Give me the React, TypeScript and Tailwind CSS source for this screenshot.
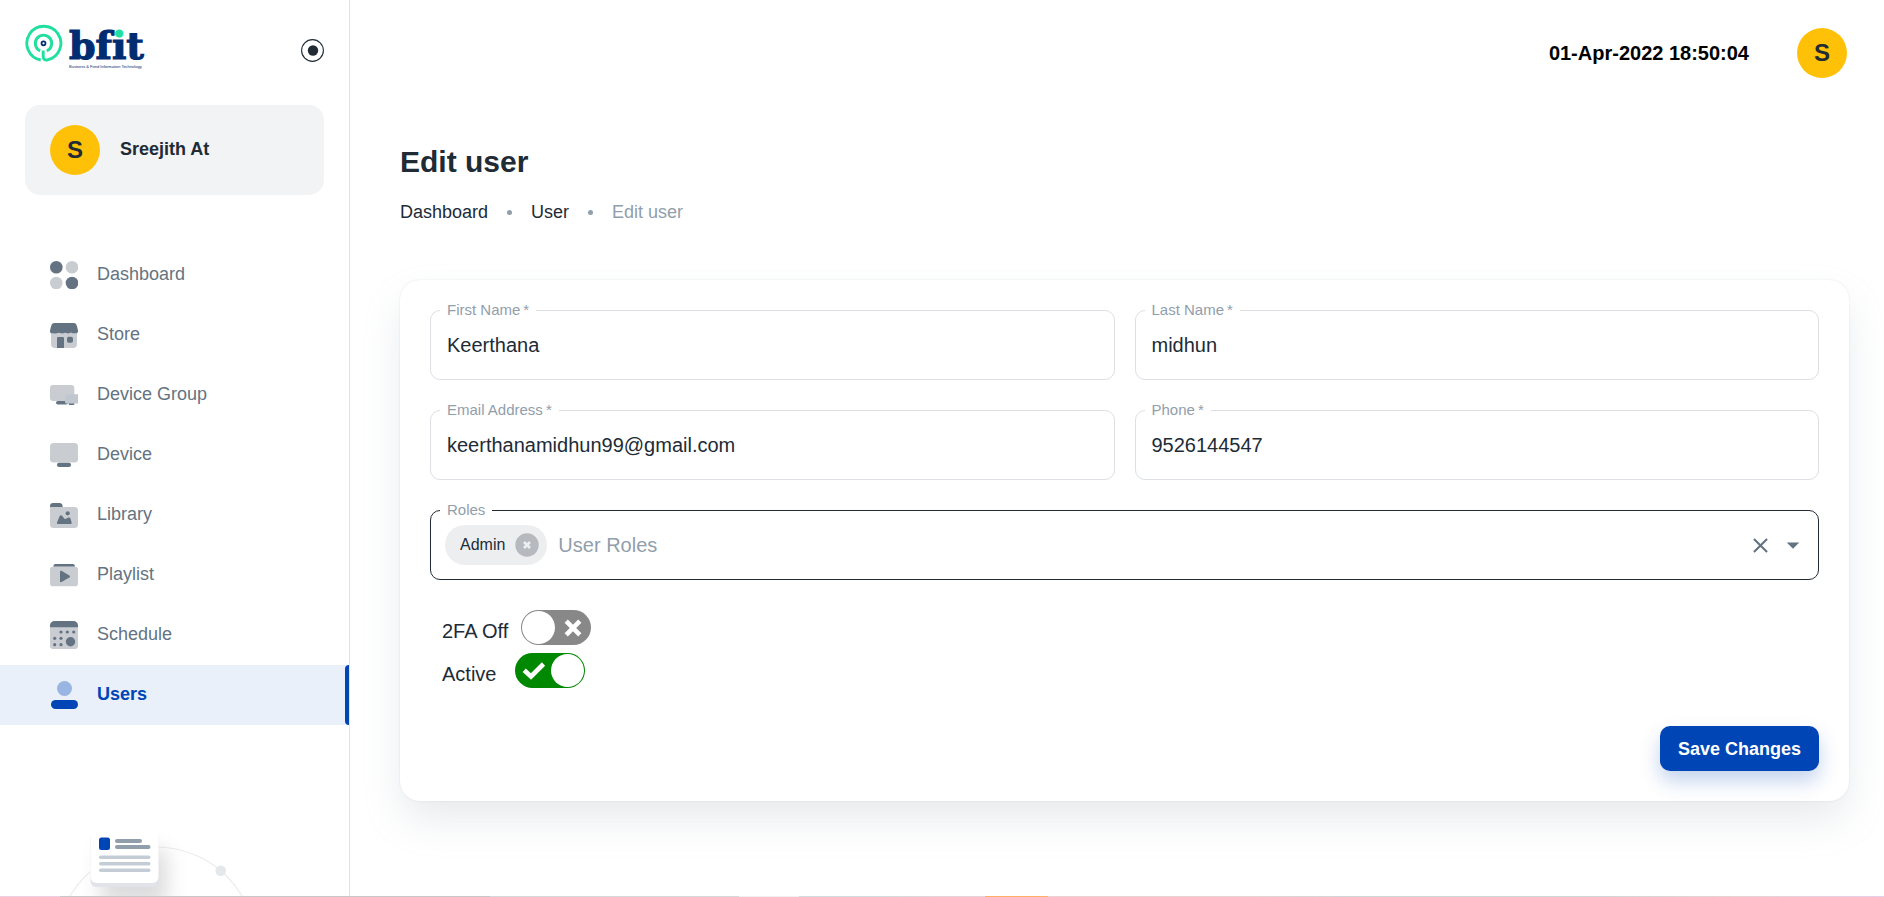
import React, { useState } from 'react';

interface NavItem {
  label: string;
  icon: React.ReactNode;
}

const DARK = '#637381';
const LIGHT = '#c9cdd2';

const navItems: NavItem[] = [
  {
    label: 'Dashboard',
    icon: (
      <>
        <circle cx="6.3" cy="6.3" r="6.3" fill={DARK} />
        <circle cx="22" cy="6.3" r="6.3" fill={LIGHT} />
        <circle cx="6.3" cy="22" r="6.3" fill={LIGHT} />
        <circle cx="22" cy="22" r="6.3" fill={DARK} />
      </>
    ),
  },
  {
    label: 'Store',
    icon: (
      <>
        <path d="M1 9H27V23A4 4 0 0 1 23 27H5A4 4 0 0 1 1 23Z" fill={LIGHT} />
        <path
          d="M4.5 2H23.5C25.6 2 26.4 3.2 26.9 5L28 9.5C28.3 11 27.6 12.3 26 12.3H22.5L21 11.6L18.5 12.6L15 11.7L12.5 12.6L8.5 11.7L6 12.6L2 12.3C.5 12.3-.3 11 0 9.5L1.2 5C1.7 3.2 2.5 2 4.5 2Z"
          fill={DARK}
        />
        <path d="M7 17.4C7 16.5 7.6 16 8.4 16H12.6C13.4 16 14 16.5 14 17.4V27H7Z" fill={DARK} />
        <rect x="17" y="15.7" width="6" height="6" rx="1.8" fill={DARK} />
      </>
    ),
  },
  {
    label: 'Device Group',
    icon: (
      <>
        <rect x="0" y="4" width="24.3" height="16" rx="3" fill={LIGHT} />
        <rect x="6" y="20" width="12" height="3.6" rx="1.8" fill={DARK} />
        <rect x="18.7" y="21.5" width="5.6" height="2.5" rx="0.8" fill={DARK} />
        <path d="M16.5 13.2H28V22.4H16.5A1.5 1.5 0 0 1 15 20.9V14.7A1.5 1.5 0 0 1 16.5 13.2Z" fill="#c0c7d0" />
      </>
    ),
  },
  {
    label: 'Device',
    icon: (
      <>
        <rect x="0" y="2" width="28" height="19.5" rx="3.5" fill={LIGHT} />
        <rect x="7" y="21.7" width="14" height="4.2" rx="2" fill={DARK} />
      </>
    ),
  },
  {
    label: 'Library',
    icon: (
      <>
        <path d="M3 2H9.5C11.5 2 12.7 3.5 12.7 6V8H0V5A3 3 0 0 1 3 2Z" fill={DARK} />
        <path d="M0 6H24.5A3.5 3.5 0 0 1 28 9.5V23.5A3.5 3.5 0 0 1 24.5 27H3.5A3.5 3.5 0 0 1 0 23.5Z" fill={LIGHT} />
        <circle cx="17.7" cy="12.3" r="2.1" fill={DARK} />
        <path
          d="M7 21.5L9.6 15.3C10.1 14 11.5 13.9 12.3 15L14 17.3C14.5 18 15.2 18.2 16 17.8L18.3 16.6C19.2 16.2 20 16.5 20.4 17.3L21.6 21.2C21.9 22.3 21.4 23 20.3 23H8.2C7.2 23 6.7 22.4 7 21.5Z"
          fill={DARK}
        />
      </>
    ),
  },
  {
    label: 'Playlist',
    icon: (
      <>
        <path d="M5.5 3H22.7C24.2 3 25 4.2 25 5.7H3.3C3.3 4.2 4 3 5.5 3Z" fill={DARK} />
        <rect x="0" y="5.7" width="28" height="19.5" rx="2.8" fill={LIGHT} />
        <path d="M10 10.6C10 9.7 10.8 9.4 11.5 9.8L19.4 14.5C20.2 15 20.2 15.9 19.4 16.4L11.5 21C10.8 21.4 10 21 10 20.2Z" fill={DARK} />
      </>
    ),
  },
  {
    label: 'Schedule',
    icon: (
      <>
        <path d="M0 6H28V25A3 3 0 0 1 25 28H3A3 3 0 0 1 0 25Z" fill={LIGHT} />
        <path d="M4.5 0H23.5A4.5 4.5 0 0 1 28 4.5V6.2H0V4.5A4.5 4.5 0 0 1 4.5 0Z" fill={DARK} />
        <g fill={DARK}>
          <circle cx="11" cy="11" r="1.6" />
          <circle cx="17.3" cy="11" r="1.6" />
          <circle cx="23.7" cy="11" r="1.6" />
          <circle cx="4.7" cy="17.3" r="1.6" />
          <circle cx="11" cy="17.3" r="1.6" />
          <circle cx="4.7" cy="23.7" r="1.6" />
          <circle cx="11" cy="23.7" r="1.6" />
          <circle cx="20.5" cy="20.7" r="4.7" />
        </g>
      </>
    ),
  },
  {
    label: 'Users',
    icon: (
      <>
        <circle cx="14.5" cy="7.5" r="7.5" fill="#99b5e1" />
        <rect x="1" y="19" width="27" height="9" rx="4.5" fill="#0045b5" />
      </>
    ),
  },
];

const Logo: React.FC = () => (
  <svg width="125" height="60" viewBox="25 20 125 60" role="img" aria-label="bfit">
    <defs>
      {/* green dot, navy stem */}
      <linearGradient id="logoDot" gradientUnits="userSpaceOnUse" x1="0" y1="20" x2="0" y2="60">
        <stop offset="0.45" stopColor="#20df9f" />
        <stop offset="0.45" stopColor="#002d72" />
      </linearGradient>
    </defs>
    <g fill="none" stroke="#20df9f" strokeWidth="2.9">
      <path d="M40.7 60A17 17 0 1 1 47.5 59.9C45 60.6 43.2 59 43.2 56.5V50.5" />
      <path d="M40.2 50.8A8.2 8.2 0 1 1 46.8 50.8" />
    </g>
    <circle cx="43.5" cy="43.3" r="2" fill="#fff" stroke="#002d72" strokeWidth="1.7" />
    <text
      x="69"
      y="59"
      fill="#002d72"
      stroke="#002d72"
      strokeWidth="1.2"
      fontSize="38"
      fontWeight="700"
      fontFamily='"DejaVu Serif", serif'
      style={{ fontVariantLigatures: 'none' }}
    >
      bf
      <tspan fill="url(#logoDot)" stroke="url(#logoDot)">
        i
      </tspan>
      t
    </text>
    <text x="69" y="68" fill="#002d72" fontSize="4" fontFamily='"Liberation Sans", Arial, sans-serif'>
      Business &amp; Fond Information Technology
    </text>
  </svg>
);

const Avatar: React.FC = () => (
  <div className="flex size-[50px] shrink-0 items-center justify-center rounded-full bg-[#ffc107] text-2xl font-bold text-[#212b36]">
    S
  </div>
);

const DocsIllustration: React.FC = () => (
  <svg width="300" height="140" viewBox="0 800 300 140" aria-hidden="true">
    <defs>
      <filter id="cardShadow" x="-50%" y="-50%" width="200%" height="220%">
        <feGaussianBlur stdDeviation="10" />
      </filter>
    </defs>
    <circle cx="156" cy="947" r="100" fill="none" stroke="#ececee" strokeWidth="1.2" />
    <circle cx="220.7" cy="870.7" r="5.3" fill="#e4e8eb" />
    <rect x="101" y="850" width="66" height="55" rx="5" fill="#8b8b90" opacity="0.3" filter="url(#cardShadow)" />
    <rect x="90.5" y="832" width="68" height="55" rx="6" fill="#e2e3ea" />
    <rect x="90.5" y="829.5" width="68" height="53.5" rx="6" fill="#fff" />
    <rect x="99" y="837.5" width="11" height="12.5" rx="2.5" fill="#0045b5" />
    <rect x="115" y="839" width="27" height="4" rx="2" fill="#919eab" />
    <rect x="115" y="845" width="35.5" height="4" rx="2" fill="#919eab" />
    <rect x="99" y="855.5" width="51.5" height="3.6" rx="1.8" fill="#c4cdd5" />
    <rect x="99" y="862" width="51.5" height="3.6" rx="1.8" fill="#c4cdd5" />
    <rect x="99" y="868.5" width="51.5" height="3.6" rx="1.8" fill="#c4cdd5" />
  </svg>
);

const Sidebar: React.FC = () => (
  <aside className="flex w-[350px] shrink-0 flex-col overflow-hidden border-r border-[#e0e3e6]">
    <div className="flex items-center justify-between px-[25px] pt-5">
      <a href="#home">
        <Logo />
      </a>
      <button type="button" aria-label="Collapse menu">
        <svg width="23" height="23" viewBox="0 0 23 23">
          <circle cx="11.5" cy="11.5" r="10.9" fill="none" stroke="#212b36" strokeWidth="1.1" />
          <circle cx="12" cy="11.5" r="5.2" fill="#212b36" />
        </svg>
      </button>
    </div>

    <div className="mx-[25px] mt-[25px] flex items-center gap-5 rounded-[15px] bg-[#f2f3f5] px-[25px] py-5">
      <Avatar />
      <span className="pb-0.5 text-lg font-bold">Sreejith At</span>
    </div>

    <nav className="mt-[50px]">
      {navItems.map(({ label, icon }) => {
        const active = label === 'Users';
        return (
          <a
            key={label}
            href={`#${label}`}
            className={`flex h-[60px] items-center gap-[19px] pl-[50px] text-lg ${
              active ? 'bg-[#e9f0f9] font-bold text-[#0045b5]' : 'text-[#637381]'
            }`}
          >
            <svg className="shrink-0" width="28" height="28" viewBox="0 0 28 28" aria-hidden="true">
              {icon}
            </svg>
            <span className="grow pb-0.5">{label}</span>
            {active && <span className="w-1 self-stretch rounded-l bg-[#0045b5]" />}
          </a>
        );
      })}
    </nav>

    <div className="mt-[75px] min-h-0 flex-1 overflow-hidden">
      <DocsIllustration />
    </div>
  </aside>
);

interface TextFieldProps {
  id: string;
  label: string;
  value: string;
  type?: string;
}

const TextField: React.FC<TextFieldProps> = ({ id, label, value, type = 'text' }) => (
  <div className="relative">
    <label htmlFor={id} className="absolute -top-2.5 left-2.5 bg-white px-[7px] text-[15px] leading-5 text-[#919eab]">
      {label}&thinsp;*
    </label>
    <input
      id={id}
      type={type}
      defaultValue={value}
      className="h-[70px] w-full rounded-[10px] border border-[#dce0e4] px-4 text-xl outline-none"
    />
  </div>
);

const RolesField: React.FC = () => (
  <div className="relative col-span-2 flex h-[70px] items-center rounded-[10px] border border-[#212b36] pr-2.5 pl-3.5">
    <label htmlFor="roles" className="absolute -top-[11px] left-[9px] bg-white px-[7px] text-[15px] leading-5 text-[#919eab]">
      Roles
    </label>
    <span className="flex h-10 items-center gap-2.5 rounded-full bg-[#edeef0] pr-2 pl-[15px] text-base">
      Admin
      <button type="button" aria-label="Remove Admin">
        <svg width="24" height="24" viewBox="0 0 24 24">
          <circle cx="12" cy="12" r="11.7" fill="#b6babf" />
          <path d="M9 9L15 15M15 9L9 15" stroke="#edeef0" strokeWidth="2.6" />
        </svg>
      </button>
    </span>
    <input
      id="roles"
      type="text"
      placeholder="User Roles"
      className="ml-[11px] min-w-0 grow text-xl outline-none placeholder:text-[#919eab]"
    />
    <button type="button" aria-label="Clear">
      <svg width="25" height="25" viewBox="0 0 24 24" fill="#637381">
        <path d="M19 6.41L17.59 5 12 10.59 6.41 5 5 6.41 10.59 12 5 17.59 6.41 19 12 13.41 17.59 19 19 17.59 13.41 12z" />
      </svg>
    </button>
    <button type="button" aria-label="Open" className="ml-[5px]">
      <svg width="30" height="30" viewBox="0 0 24 24" fill="#637381">
        <path d="M7 10l5 5 5-5z" />
      </svg>
    </button>
  </div>
);

interface ToggleProps {
  label: string;
  initial: boolean;
  className: string;
}

const Toggle: React.FC<ToggleProps> = ({ label, initial, className }) => {
  const [checked, setChecked] = useState(initial);

  return (
    <label className={`flex w-fit cursor-pointer items-end text-xl leading-7 ${className}`}>
      {label}
      <input type="checkbox" className="sr-only" checked={checked} onChange={() => setChecked(!checked)} />
      <span
        className={`flex h-[35px] w-[70px] items-center rounded-full p-px ${
          checked ? 'flex-row-reverse bg-[#008800]' : 'bg-[#888888]'
        }`}
      >
        <span className="size-[33px] rounded-full bg-white" />
        <span className="flex grow justify-center">
          {checked ? (
            <svg width="24" height="20" viewBox="0 0 24 20">
              <path d="M2.2 9.2L9 15.5L21.5 3" fill="none" stroke="#fff" strokeWidth="4.6" />
            </svg>
          ) : (
            <svg width="18" height="18" viewBox="0 0 18 18">
              <path d="M2.2 2.2L15.8 15.8M15.8 2.2L2.2 15.8" stroke="#fff" strokeWidth="4.6" />
            </svg>
          )}
        </span>
      </span>
    </label>
  );
};

const App: React.FC = () => {
  return (
    <div className="flex h-screen flex-col bg-white font-['Liberation_Sans',Arial,sans-serif] text-[#212b36]">
      <div className="flex min-h-0 grow">
        <Sidebar />

        <main className="min-w-0 grow overflow-hidden pr-[35px] pl-[50px]">
          <header className="flex items-center justify-end gap-12 pt-7 pr-0.5">
            <time className="text-xl font-bold text-black">01-Apr-2022 18:50:04</time>
            <Avatar />
          </header>

          <h1 className="mt-[61px] text-3xl leading-[45px] font-bold">Edit user</h1>
          <nav aria-label="Breadcrumb" className="mt-4 flex items-center gap-[19px] text-lg leading-[25px]">
            <a href="#dashboard">Dashboard</a>
            <span className="size-[5px] rounded-full bg-[#919eab]" />
            <a href="#user">User</a>
            <span className="size-[5px] rounded-full bg-[#919eab]" />
            <span className="text-[#919eab]">Edit user</span>
          </nav>

          <form
            onSubmit={(e) => e.preventDefault()}
            className="mt-[55px] rounded-[20px] bg-white p-[30px] shadow-[0_0_2px_rgba(145,158,171,0.24),0_20px_40px_-4px_rgba(145,158,171,0.24)]"
          >
            <div className="grid grid-cols-2 gap-x-5 gap-y-[30px]">
              <TextField id="first-name" label="First Name" value="Keerthana" />
              <TextField id="last-name" label="Last Name" value="midhun" />
              <TextField id="email" label="Email Address" value="keerthanamidhun99@gmail.com" type="email" />
              <TextField id="phone" label="Phone" value="9526144547" type="tel" />
              <RolesField />
            </div>

            <div className="mt-[30px] flex flex-col gap-2 pl-3">
              <Toggle label="2FA Off" initial={false} className="gap-[13px]" />
              <Toggle label="Active" initial={true} className="gap-[19px]" />
            </div>

            <div className="mt-[38px] flex justify-end">
              <button
                type="submit"
                className="h-[45px] rounded-[10px] bg-[#0045b5] px-[18px] text-lg font-bold text-white shadow-[0_10px_20px_rgba(0,69,181,0.24)]"
              >
                Save Changes
              </button>
            </div>
          </form>
        </main>
      </div>

      {/* thin coloured edge along the bottom */}
      <div className="h-px shrink-0 bg-[linear-gradient(90deg,#eecfe2_0_3.2%,#c8c8c8_3.2%_26%,#d6d9da_26%_39.2%,#f0f0f0_39.2%_42.4%,#d3dcdc_42.4%_47%,#e6d3d9_50%_52.3%,#ffb066_52.3%_55.6%,#ecd2d2_55.6%,#e6d3d3_66%,#cfd6d6_72%_84%,#e6d3d3_92%,#e3d0ea)]" />
    </div>
  );
};

export default App;
